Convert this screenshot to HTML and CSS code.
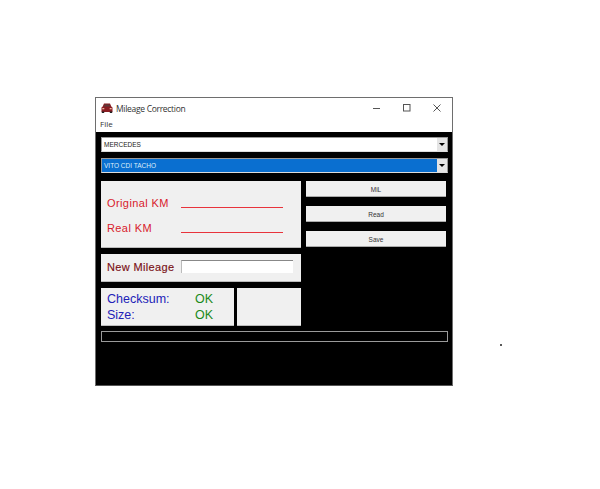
FILE: index.html
```html
<!DOCTYPE html>
<html lang="en">
<head>
<meta charset="utf-8">
<title>Mileage Correction</title>
<link rel="stylesheet" href="styles.css">
</head>
<body>
<div class="window">
  <div class="titlebar">
    <svg class="appicon" width="12" height="10" viewBox="0 0 12 10"><path d="M3 0.5 L9 0.5 L10.3 3.5 L11.5 4.5 L11.5 9 L0.5 9 L0.5 4.5 L1.7 3.5 Z" fill="#8a1c22"/><path d="M3.6 1.5 L8.4 1.5 L9.3 3.5 L2.7 3.5 Z" fill="#5a3a3a"/><rect x="1.3" y="5" width="2" height="1.3" fill="#e8b8a0"/><rect x="8.7" y="5" width="2" height="1.3" fill="#e8b8a0"/><rect x="0.8" y="8.5" width="2.4" height="1.5" fill="#222"/><rect x="8.8" y="8.5" width="2.4" height="1.5" fill="#222"/></svg>
    <span class="title">Mileage Correction</span>
    <div class="controls">
      <svg width="8" height="8" viewBox="0 0 8 8"><path d="M0 4.5H7" stroke="#555" fill="none"/></svg>
      <svg width="8" height="8" viewBox="0 0 8 8"><rect x="0.5" y="0.5" width="6.5" height="6.5" stroke="#555" fill="none"/></svg>
      <svg width="8" height="8" viewBox="0 0 8 8"><path d="M0.5 0.5L7.5 7.5M7.5 0.5L0.5 7.5" stroke="#555" fill="none"/></svg>
    </div>
  </div>
  <div class="menubar">File</div>
  <div class="client">
    <div class="combo"><span class="combo-text">MERCEDES</span><span class="arrow"></span></div>
    <div class="combo selected"><span class="combo-text">VITO CDI TACHO</span><span class="arrow"></span></div>
    <div class="columns">
      <div class="left">
        <div class="panel km">
          <div class="km-row"><span class="km-label">Original KM</span><span class="km-line"></span></div>
          <div class="km-row"><span class="km-label">Real KM</span><span class="km-line"></span></div>
        </div>
        <div class="panel mileage">
          <span class="mileage-label">New Mileage</span>
          <span class="mileage-input"></span>
        </div>
        <div class="status-row">
          <div class="panel status">
            <div class="status-line"><span class="status-label">Checksum:</span><span class="ok">OK</span></div>
            <div class="status-line"><span class="status-label">Size:</span><span class="ok">OK</span></div>
          </div>
          <div class="panel blank"></div>
        </div>
      </div>
      <div class="right">
        <div class="btn">MiL</div>
        <div class="btn">Read</div>
        <div class="btn">Save</div>
      </div>
    </div>
    <div class="progress"></div>
  </div>
</div>
<span class="speck"></span>
</body>
</html>
```
FILE: styles.css
```css
html, body { margin: 0; padding: 0; background: #fff; }
body { position: relative; width: 600px; height: 489px; overflow: hidden; padding: 97px 0 0 95px; box-sizing: border-box; font-family: "Liberation Sans", Arial, sans-serif; }
.window { width: 358px; height: 289px; box-sizing: border-box; border: 1px solid #6e6e6e; border-bottom-color: #555; display: flex; flex-direction: column; background: #000; }
.titlebar { height: 20px; background: #fff; display: flex; align-items: center; padding-left: 5px; flex: none; }
.appicon { margin-right: 3px; flex: none; }
.title { font: 8.5px "Open Sans", sans-serif; letter-spacing: -.3px; color: #333; }
.controls { margin-left: auto; display: flex; gap: 22px; padding-right: 11px; }
.menubar { height: 14px; background: #fff; font: 8px "Open Sans", sans-serif; color: #333; padding-left: 4px; line-height: 12px; flex: none; }
.client { flex: 1; background: #000; padding: 5px 4px 0 5px; display: flex; flex-direction: column; }
.combo { height: 15px; width: 347px; box-sizing: border-box; background: #fff; border: 1px solid #999; border-bottom-color: #ddd; display: flex; align-items: center; justify-content: space-between; flex: none; }
.combo + .combo { margin-top: 6px; }
.combo-text { font-size: 6.5px; color: #222; padding-left: 2px; }
.selected { background: #0a6fd0; }
.selected .combo-text { color: #dfeefa; }
.arrow { width: 10px; height: 13px; background: #e4e4e4; position: relative; }
.arrow::after { content: ""; position: absolute; left: 2px; top: 5px; border: 3px solid transparent; border-top: 3px solid #000; border-bottom: 0; }
.columns { display: flex; gap: 5px; margin-top: 8px; flex: none; }
.left { width: 200px; display: flex; flex-direction: column; }
.right { width: 140px; display: flex; flex-direction: column; gap: 9px; }
.panel { background: #f0f0f0; box-sizing: border-box; border-bottom: 1px solid #bbb; }
.km { height: 67px; padding: 14px 18px 0 6px; display: flex; flex-direction: column; gap: 9px; }
.km-row { height: 16px; display: flex; align-items: center; justify-content: space-between; }
.km-label { font-size: 11px; color: #d8202c; letter-spacing: .4px; }
.km-line { width: 102px; height: 1px; background: #e8333c; margin-top: 9px; }
.mileage { height: 28px; margin-top: 6px; display: flex; align-items: center; padding: 0 8px 2px 6px; justify-content: space-between; }
.mileage-label { font-size: 11px; color: #7a1015; letter-spacing: .35px; -webkit-text-stroke: .15px #7a1015; }
.mileage-input { width: 112px; height: 13px; box-sizing: border-box; background: #fff; border-top: 1px solid #888; border-left: 1px solid #bbb; }
.status-row { display: flex; gap: 3px; margin-top: 6px; }
.status { width: 133px; height: 38px; padding: 3px 0 0 6px; }
.blank { width: 64px; height: 38px; }
.status-line { display: flex; height: 16px; align-items: center; font-size: 12.5px; line-height: 15px; }
.status-label { width: 88px; color: #2222b8; }
.ok { color: #1a8a1a; }
.btn { height: 16px; box-sizing: border-box; background: #f0f0f0; border-bottom: 1px solid #aaa; padding-top: 1px; display: flex; align-items: center; justify-content: center; font-size: 6.5px; color: #333; }
.progress { height: 11px; width: 347px; box-sizing: border-box; border: 1px solid #9a9a9a; margin-top: 5px; flex: none; }
.speck { position: absolute; left: 500px; top: 344px; width: 2px; height: 2px; background: #222; border-radius: 50%; }
```
